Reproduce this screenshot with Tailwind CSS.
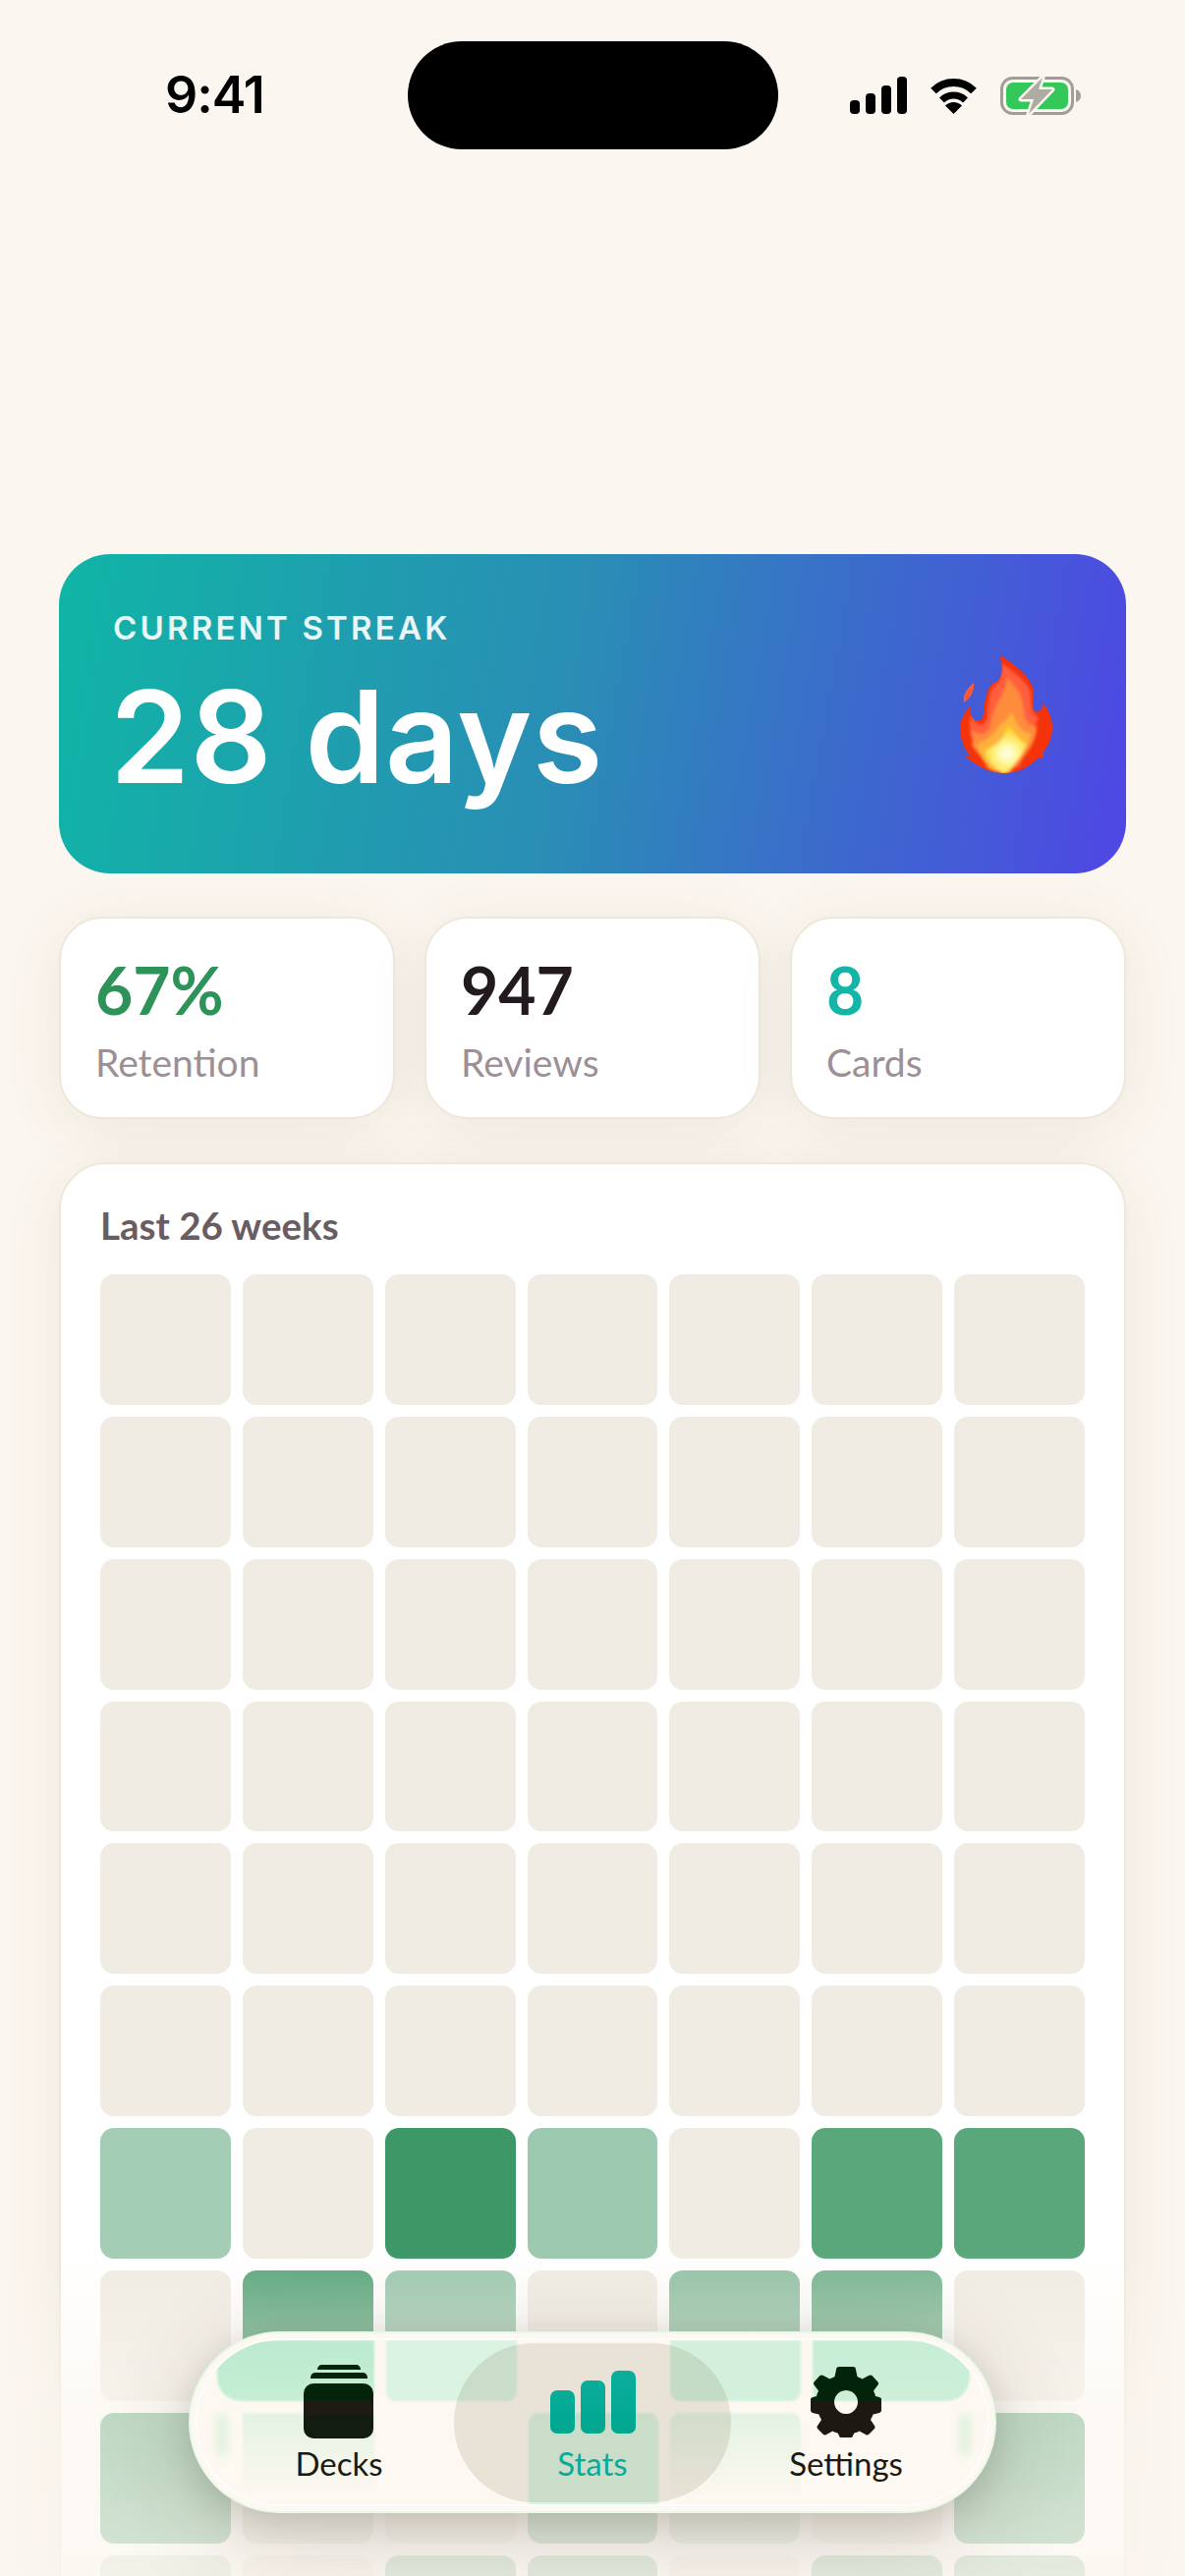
<!DOCTYPE html>
<html lang="en">
<head>
    <meta charset="UTF-8">
    <meta name="viewport" content="width=device-width, initial-scale=1.0">
    <title>Stats</title>
    <script src="https://cdn.jsdelivr.net/npm/@tailwindcss/browser@4"></script>
</head>
<body class="bg-[#fbf6ef]">
    <div class="relative h-[2622px] w-[1206px] overflow-hidden bg-[#fbf6ef] font-['Inter',sans-serif]">

        <!-- status bar -->
        <div class="flex h-[564px] items-start">
            <div class="flex w-full items-center pt-[42px] h-[152px]">
                <div class="w-[415px] pl-[168px] text-[52px] leading-[110px] font-semibold tracking-[-1px] text-black">9:41</div>
                <div class="h-[110px] w-[377px] rounded-full bg-black"></div>
                <div class="flex items-center pl-[73px]">
                    <svg width="58" height="38" viewBox="0 0 58 38" fill="#000"><rect x="0" y="24" width="10" height="14" rx="4"/><rect x="16" y="17" width="10" height="21" rx="4"/><rect x="32" y="9" width="10" height="29" rx="4"/><rect x="48" y="0" width="10" height="38" rx="4"/></svg>
                    <svg class="ml-[23px]" width="49" height="37" viewBox="2 0 45 37" fill="none"><path d="M4 13.500A29 29 0 0 1 45 13.500" stroke="#000" stroke-width="8"/><path d="M12.500 23A17 17 0 0 1 36.500 23" stroke="#000" stroke-width="7"/><path d="M24.500 37L16 28.500A12 12 0 0 1 33 28.500Z" fill="#000"/></svg>
                    <svg class="ml-[23px]" width="82" height="39" viewBox="0 0 82 39"><rect x="1.500" y="1.500" width="72" height="36" rx="11" fill="none" stroke="#a09e96" stroke-width="3"/><rect x="6" y="6" width="63" height="27" rx="7" fill="#34c759"/><path d="M77 13c3 1 5 3 5 6.500s-2 5.500-5 6.500z" fill="#a09e96"/><path d="M43 1L21 23H34L29 38L53 13H39Z" fill="#aeaba3" stroke="#fbf6ef" stroke-width="5" stroke-linejoin="round" paint-order="stroke"/></svg>
                </div>
            </div>
        </div>

        <main class="flex flex-col px-[60px]">
            <!-- streak -->
            <section class="flex h-[325px] items-center justify-between rounded-[52px] bg-[linear-gradient(100deg,#10b5a6_0%,#2a8db5_48%,#4f46e5_100%)] pr-[75px] pl-[55px]">
                <div class="-mt-[10px]">
                    <div class="text-[33px] leading-[40px] font-semibold tracking-[3.200px] text-white/90">CURRENT STREAK</div>
                    <div class="mt-[16px] -ml-[3px] text-[130px] leading-[150px] font-semibold tracking-[0.500px] text-white">28 days</div>
                </div>
                <svg width="94" height="120" viewBox="0 0 94 120">
                    <defs>
                        <radialGradient id="core" cx="48" cy="100" r="30" gradientUnits="userSpaceOnUse"><stop offset="0" stop-color="#fffff0"/><stop offset="0.35" stop-color="#fff79a"/><stop offset="0.8" stop-color="#ffd52e"/><stop offset="1" stop-color="#ffb52a"/></radialGradient>
                        <filter id="soft" x="-10%" y="-10%" width="120%" height="120%"><feGaussianBlur stdDeviation="1.600"/></filter>
                        <clipPath id="flame"><path d="M41 0C55 9 73 22 75 37C76 44 72 52 76 57C80 59 84 55 85 49C90 56 94 64 94 73C94 83 91 90 85 98L85 104L79 105C70 114 58 120 45 120C30 120 18 113 5 103L10 102C4 95 0 84 0 73C1 65 5 57 10 52C10 60 13 67 18 67C24 66 24 60 25 50C26 41 29 33 33 28C39 28 41 24 43 14C42 8 41 4 41 0Z"/></clipPath>
                    </defs>
                    <path d="M14 28C15 35 11 44 4 48C2 40 8 33 14 28Z" fill="#ff5a36"/>
                    <g clip-path="url(#flame)">
                        <rect width="94" height="120" fill="#f4330b"/>
                        <g filter="url(#soft)">
                            <path d="M43 8C55 18 71 28 72 40C72 50 72 58 80 64C76 72 74 74 70 92L60 114L28 114L10 80C12 76 8 70 12 60C16 72 24 76 28 62C28 50 30 36 36 30C40 29 43 24 43 8Z" fill="#ff5f3c"/>
                            <path d="M48 23C58 33 64 42 65 56C65 66 70 72 78 72C78 82 74 92 66 102L50 120L34 118L12 92C14 86 12 80 12 76C22 84 30 80 32 66C34 50 46 42 48 23Z" fill="#ff8b3c"/>
                            <path d="M52 58C58 68 60 78 72 80C70 92 62 104 50 120L30 116C20 102 14 92 22 88C34 84 38 72 44 68C48 66 50 62 52 58Z" fill="#ffb23a"/>
                            <path d="M49 68C54 80 62 88 68 90C64 100 56 112 44 122C34 114 24 104 26 96C38 92 46 84 49 68Z" fill="url(#core)"/>
                        </g>
                    </g>
                </svg>
            </section>

            <!-- stat cards -->
            <section class="mt-[44px] grid grid-cols-3 gap-[30px]">
                <div class="h-[206px] rounded-[44px] border-2 border-[#efe7da] bg-white pt-[37px] pl-[35px] shadow-[0_10px_60px_rgba(90,75,50,0.09)]">
                    <div class="font-['Lato',sans-serif] text-[66px] leading-[72px] font-bold text-[#2d9359]">67%</div>
                    <div class="mt-[15px] font-['Lato',sans-serif] text-[39px] leading-[44px] text-[#9c8f96]">Retention</div>
                </div>
                <div class="h-[206px] rounded-[44px] border-2 border-[#efe7da] bg-white pt-[37px] pl-[35px] shadow-[0_10px_60px_rgba(90,75,50,0.09)]">
                    <div class="font-['Lato',sans-serif] text-[66px] leading-[72px] font-bold text-[#231a20]">947</div>
                    <div class="mt-[15px] font-['Lato',sans-serif] text-[39px] leading-[44px] text-[#9c8f96]">Reviews</div>
                </div>
                <div class="h-[206px] rounded-[44px] border-2 border-[#efe7da] bg-white pt-[37px] pl-[35px] shadow-[0_10px_60px_rgba(90,75,50,0.09)]">
                    <div class="font-['Lato',sans-serif] text-[66px] leading-[72px] font-bold text-[#12b5a6]">8</div>
                    <div class="mt-[15px] font-['Lato',sans-serif] text-[39px] leading-[44px] text-[#9c8f96]">Cards</div>
                </div>
            </section>

            <!-- heatmap -->
            <section class="mt-[44px] rounded-[48px] border-2 border-[#efe7da] bg-white px-[40px] pt-[40px] pb-[40px] shadow-[0_10px_60px_rgba(90,75,50,0.09)]">
                <h2 class="font-['Lato',sans-serif] text-[38.500px] leading-[44px] font-bold text-[#6a5c63]">Last 26 weeks</h2>
                <div id="grid" class="mt-[28px] grid grid-cols-7 gap-[12px]"></div>
            </section>
        </main>

        <!-- fade under the tab bar -->
        <div class="absolute inset-x-0 bottom-0 h-[330px] bg-[linear-gradient(180deg,rgba(251,246,239,0)_0%,rgba(251,246,239,0.3)_22%,rgba(251,246,239,0.62)_48%,rgba(251,246,239,0.78)_100%)]"></div>

        <!-- tab bar -->
        <nav class="absolute top-[2373px] left-[192px] flex h-[185px] w-[822px] rounded-full border-2 border-[#e9f8e8] bg-[#fdf9f2] px-[22px] shadow-[0_10px_30px_rgba(60,50,30,0.12),0_20px_90px_rgba(60,50,30,0.22)]">
            <div class="absolute inset-[7px] overflow-hidden rounded-full ring-2 ring-white/70">
                <div class="absolute top-0 left-[20px] h-[62px] w-[160px] rounded-br-[10px] rounded-bl-[24px] bg-[linear-gradient(180deg,#bcebd0,#c6eed5)] blur-[1px]"></div>
                <div class="absolute top-0 left-[192px] h-[62px] w-[133px] rounded-b-[10px] bg-[#daf3e2] blur-[1px]"></div>
                <div class="absolute top-0 left-[481px] h-[62px] w-[133px] rounded-b-[10px] bg-[#d3f0dc] blur-[1px]"></div>
                <div class="absolute top-0 left-[626px] h-[62px] w-[160px] rounded-br-[24px] rounded-bl-[10px] bg-[linear-gradient(180deg,#c8eed6,#cdefd9)] blur-[1px]"></div>
                <div class="absolute top-[74px] left-[18px] h-[44px] w-[14px] rounded-full bg-[#e6f3e2] blur-[3px]"></div>
                <div class="absolute top-[74px] left-[774px] h-[44px] w-[14px] rounded-full bg-[#e6f3e2] blur-[3px]"></div>
                <div class="absolute top-[74px] left-[46px] h-[95px] w-[134px] bg-[linear-gradient(180deg,#e3f3e3,#fdf8f1_85%)] blur-[1px]"></div>
                <div class="absolute top-[74px] left-[337px] h-[95px] w-[132px] rounded-t-[10px] bg-[#d9f3e1] blur-[1px]"></div>
                <div class="absolute top-[74px] left-[481px] h-[95px] w-[133px] rounded-t-[10px] bg-[linear-gradient(180deg,#e3f3e3,#fdf8f1_90%)] blur-[1px]"></div>
            </div>
            <div class="absolute top-[10px] left-[268px] h-[162px] w-[282px] rounded-full bg-[#6b5a3a]/14"></div>

            <a class="relative flex w-[258px] flex-col items-center pt-[30px] text-[#1a1a14]">
                <svg width="80" height="80" viewBox="0 0 80 80">
                    <defs><linearGradient id="ink" x1="0" y1="0" x2="0" y2="80" gradientUnits="userSpaceOnUse"><stop offset="0.47" stop-color="#03240b"/><stop offset="0.475" stop-color="#1e1a14"/><stop offset="0.65" stop-color="#1e1a14"/><stop offset="0.68" stop-color="#131c10"/></linearGradient></defs>
                    <path d="M18 7C18 4 20 2 23 2H57C60 2 62 4 62 7Z" fill="url(#ink)"/>
                    <path d="M11 16C11 12 13 10 16 10H64C67 10 69 12 69 16Z" fill="url(#ink)"/>
                    <rect x="4" y="21" width="71" height="56" rx="10" fill="url(#ink)"/>
                </svg>
                <span class="mt-[3px] font-['Lato',sans-serif] text-[33px] leading-[38px]">Decks</span>
            </a>
            <a class="relative flex w-[258px] flex-col items-center pt-[30px] text-[#0aab9a]">
                <svg width="87" height="80" viewBox="0 0 87 80">
                    <defs><linearGradient id="teal" x1="0" y1="8" x2="0" y2="72" gradientUnits="userSpaceOnUse"><stop offset="0" stop-color="#0bae9e"/><stop offset="1" stop-color="#00a68e"/></linearGradient></defs>
                    <rect x="0" y="28" width="25" height="44" rx="7" fill="url(#teal)"/>
                    <rect x="31" y="18" width="25" height="54" rx="7" fill="url(#teal)"/>
                    <rect x="62" y="8" width="25" height="64" rx="7" fill="url(#teal)"/>
                </svg>
                <span class="mt-[3px] font-['Lato',sans-serif] text-[33px] leading-[38px]">Stats</span>
            </a>
            <a class="relative flex w-[258px] flex-col items-center pt-[30px] text-[#1a1a14]">
                <svg width="80" height="80" viewBox="0 0 80 80">
                    <defs><linearGradient id="ink2" x1="0" y1="0" x2="0" y2="80" gradientUnits="userSpaceOnUse"><stop offset="0.47" stop-color="#03240b"/><stop offset="0.475" stop-color="#1c1913"/></linearGradient></defs>
                    <path fill-rule="evenodd" fill="url(#ink2)" d="M33 4H47C49 4 50 5 50 7L51.500 14C53 15 55 15.500 56.500 16.500L63 13C65 12 66 12.500 67 13.500L72 19C73 20 73.500 21 72.500 22.500L68 28.500C69 30.500 69.500 32 70 34L74 35C75 35.500 76 36 76 37V48C76 50 75 50.500 74 51L67.500 52.500C67 54.500 66 56 65 58L69 64C70 65.500 69.500 66.500 68.500 67.500L63.500 72.500C62.500 73.500 61 74 60 73L53.500 69.500C52 70.500 50.500 71 48.500 71.500L47 74C47 75.500 46 76 44.500 76H35.500C34 76 33 75.500 33 74L31.500 71.500C29.500 71 28 70.500 26.500 69.500L20 73C19 74 17.500 73.500 16.500 72.500L11.500 67.500C10.500 66.500 10 65.500 11 64L15 58C14 56 13 54.500 12.500 52.500L6 51C5 50.500 4 50 4 48V37C4 36 5 35.500 6 35L10 34C10.500 32 11 30.500 12 28.500L7.500 22.500C6.500 21 7 20 8 19L13 13.500C14 12.500 15 12 17 13L23.500 16.500C25 15.500 27 15 28.500 14L30 7C30 5 31 4 33 4ZM40 28A12 12 0 1 0 40.010 28Z"/>
                </svg>
                <span class="mt-[3px] font-['Lato',sans-serif] text-[33px] leading-[38px]">Settings</span>
            </a>
        </nav>
    </div>

    <script>
        const e = "#f0ece4", a = "#a4cdb6", b = "#9cc9b0", c = "#3d9766", d = "#5aa77c", f = "#92c3a6", g = "#78b590";
        const cells = [
            e, e, e, e, e, e, e,
            e, e, e, e, e, e, e,
            e, e, e, e, e, e, e,
            e, e, e, e, e, e, e,
            e, e, e, e, e, e, e,
            e, e, e, e, e, e, e,
            a, e, c, b, e, d, d,
            e, d, b, e, f, g, e,
            d, "#dbe3d8", e, f, "#cfe0d2", e, d,
            "#cfe0d2", e, f, f, e, f, f,
        ];
        const grid = document.getElementById("grid");
        cells.forEach((color) => {
            const cell = document.createElement("div");
            cell.className = "aspect-square rounded-[14px]";
            cell.style.background = color;
            grid.appendChild(cell);
        });
    </script>
</body>
</html>
